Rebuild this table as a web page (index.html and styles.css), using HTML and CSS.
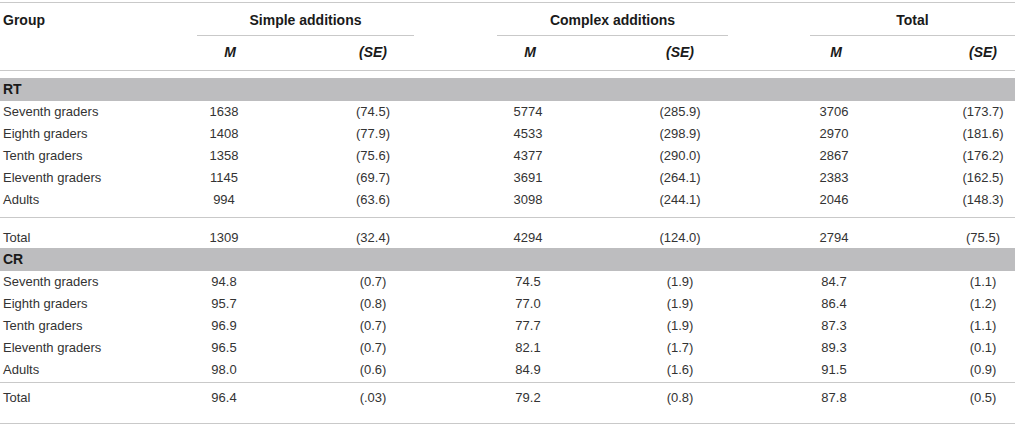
FILE: index.html
```html
<!DOCTYPE html>
<html lang="en">
<head>
    <meta charset="UTF-8">
    <title>Response times and correct responses by group</title>
    <link rel="stylesheet" href="styles.css">
</head>
<body>

    <!-- Results table -->
    <div class="results">
        <div class="row head-top">
            <div class="cell label">Group</div>
            <div class="cell span simple">Simple additions</div>
            <div class="cell span complex">Complex additions</div>
            <div class="cell span total">Total</div>
        </div>
        <div class="row head-sub">
            <div class="cell label"></div>
            <div class="cell m1 stat">M</div>
            <div class="cell se1 stat">(SE)</div>
            <div class="cell m2 stat">M</div>
            <div class="cell se2 stat">(SE)</div>
            <div class="cell m3 stat">M</div>
            <div class="cell se3 stat">(SE)</div>
        </div>

        <!-- RT section -->
        <div class="band">RT</div>
        <div class="section first">
            <div class="row"><div class="cell label">Seventh graders</div><div class="cell m1">1638</div><div class="cell se1">(74.5)</div><div class="cell m2">5774</div><div class="cell se2">(285.9)</div><div class="cell m3">3706</div><div class="cell se3">(173.7)</div></div>
            <div class="row"><div class="cell label">Eighth graders</div><div class="cell m1">1408</div><div class="cell se1">(77.9)</div><div class="cell m2">4533</div><div class="cell se2">(298.9)</div><div class="cell m3">2970</div><div class="cell se3">(181.6)</div></div>
            <div class="row"><div class="cell label">Tenth graders</div><div class="cell m1">1358</div><div class="cell se1">(75.6)</div><div class="cell m2">4377</div><div class="cell se2">(290.0)</div><div class="cell m3">2867</div><div class="cell se3">(176.2)</div></div>
            <div class="row"><div class="cell label">Eleventh graders</div><div class="cell m1">1145</div><div class="cell se1">(69.7)</div><div class="cell m2">3691</div><div class="cell se2">(264.1)</div><div class="cell m3">2383</div><div class="cell se3">(162.5)</div></div>
            <div class="row"><div class="cell label">Adults</div><div class="cell m1">994</div><div class="cell se1">(63.6)</div><div class="cell m2">3098</div><div class="cell se2">(244.1)</div><div class="cell m3">2046</div><div class="cell se3">(148.3)</div></div>
        </div>
        <div class="row total-row first">
            <div class="cell label">Total</div><div class="cell m1">1309</div><div class="cell se1">(32.4)</div><div class="cell m2">4294</div><div class="cell se2">(124.0)</div><div class="cell m3">2794</div><div class="cell se3">(75.5)</div>
        </div>

        <!-- CR section -->
        <div class="band">CR</div>
        <div class="section second">
            <div class="row"><div class="cell label">Seventh graders</div><div class="cell m1">94.8</div><div class="cell se1">(0.7)</div><div class="cell m2">74.5</div><div class="cell se2">(1.9)</div><div class="cell m3">84.7</div><div class="cell se3">(1.1)</div></div>
            <div class="row"><div class="cell label">Eighth graders</div><div class="cell m1">95.7</div><div class="cell se1">(0.8)</div><div class="cell m2">77.0</div><div class="cell se2">(1.9)</div><div class="cell m3">86.4</div><div class="cell se3">(1.2)</div></div>
            <div class="row"><div class="cell label">Tenth graders</div><div class="cell m1">96.9</div><div class="cell se1">(0.7)</div><div class="cell m2">77.7</div><div class="cell se2">(1.9)</div><div class="cell m3">87.3</div><div class="cell se3">(1.1)</div></div>
            <div class="row"><div class="cell label">Eleventh graders</div><div class="cell m1">96.5</div><div class="cell se1">(0.7)</div><div class="cell m2">82.1</div><div class="cell se2">(1.7)</div><div class="cell m3">89.3</div><div class="cell se3">(0.1)</div></div>
            <div class="row"><div class="cell label">Adults</div><div class="cell m1">98.0</div><div class="cell se1">(0.6)</div><div class="cell m2">84.9</div><div class="cell se2">(1.6)</div><div class="cell m3">91.5</div><div class="cell se3">(0.9)</div></div>
        </div>
        <div class="row total-row last">
            <div class="cell label">Total</div><div class="cell m1">96.4</div><div class="cell se1">(.03)</div><div class="cell m2">79.2</div><div class="cell se2">(0.8)</div><div class="cell m3">87.8</div><div class="cell se3">(0.5)</div>
        </div>
    </div>

</body>
</html>
```

FILE: styles.css
```css
body {
    font-family: "Liberation Sans", Arial, sans-serif;
    font-size: 13px;
    color: #333333;
    margin: 0;
    padding: 0;
    background-color: white;
}

/* Table frame */
.results {
    width: 1015px;
    margin-top: 2px;
    border-top: 1px solid #c9c9c9;
}

.row {
    display: grid;
    grid-template-columns: 197px 54px 81px 82px 83px 62px 73px 96px 82px 48px 93px 64px;
    line-height: 22px;
}

.cell {
    text-align: center;
    white-space: nowrap;
}

.cell.label {
    grid-column: 1;
    text-align: left;
    padding-left: 3px;
}

.m1 { grid-column: 2; }
.se1 { grid-column: 4; }
.m2 { grid-column: 6; }
.se2 { grid-column: 8; }
.m3 { grid-column: 10; }
.se3 { grid-column: 12; }

/* Header rows */
.head-top .cell {
    font-size: 14px;
    font-weight: bold;
    color: #1a1a1a;
    padding-top: 6px;
    padding-bottom: 4px;
}

.head-top .span {
    border-bottom: 1px solid #c9c9c9;
}

.head-top .simple { grid-column: 2 / 5; }
.head-top .complex { grid-column: 6 / 9; }
.head-top .total { grid-column: 10 / 13; }

.head-sub {
    padding-top: 5px;
    padding-bottom: 7px;
    border-bottom: 1px solid #c9c9c9;
}

.head-sub .stat {
    font-size: 14px;
    font-weight: bold;
    font-style: italic;
    color: #1a1a1a;
}

.head-sub .m1 { padding-left: 12px; }
.head-sub .m2 { padding-left: 4px; }
.head-sub .m3 { padding-left: 4px; }

/* Grey section bands */
.band {
    background-color: #bdbdbf;
    font-size: 14px;
    font-weight: bold;
    color: #1a1a1a;
    line-height: 23px;
    padding-left: 3px;
}

.results > .head-sub + .band {
    margin-top: 7px;
}

/* Body sections */
.section {
    border-bottom: 1px solid #c9c9c9;
}

.section.first {
    padding-bottom: 6px;
}

.section.second {
    padding-bottom: 1px;
}

.total-row {
    line-height: 20px;
}

.total-row.first {
    padding-top: 10px;
}

.total-row.last {
    padding-top: 5px;
    padding-bottom: 15px;
    border-bottom: 1px solid #c9c9c9;
}
```
